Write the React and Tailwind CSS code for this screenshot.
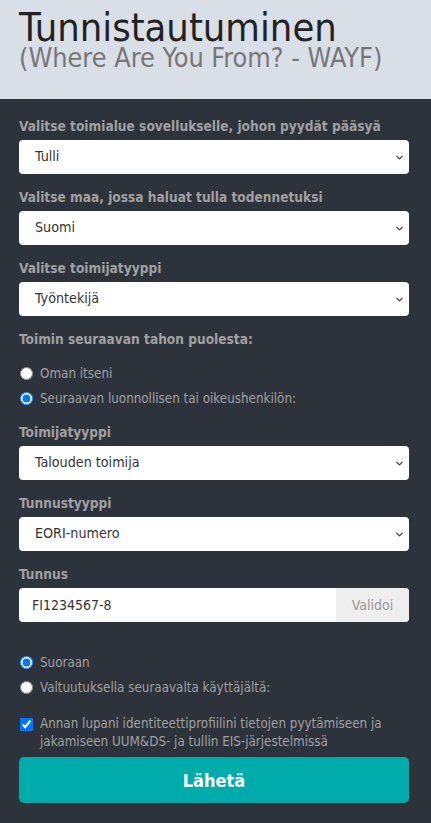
import { ChevronDown } from 'lucide-react'

const font = { fontFamily: '"DejaVu Sans Condensed", "DejaVu Sans", Verdana, sans-serif' }

const Label = ({ children }) => (
  <div className="text-[13.6px] font-bold text-[#a0a0a0] leading-[16px] mb-[6px]">{children}</div>
)

const Select = ({ value }) => (
  <div className="relative">
    <select
      defaultValue={value}
      className="appearance-none w-full h-[34px] bg-white rounded-[4px] pl-[16px] pr-8 text-[14.2px] text-[#333] outline-none"
      style={font}
    >
      <option>{value}</option>
    </select>
    <ChevronDown className="absolute right-[4px] top-[12px] w-[11px] h-[11px] text-[#444] pointer-events-none" strokeWidth={3} />
  </div>
)

const Radio = ({ label, checked, name }) => (
  <label className="flex items-center gap-[7px] h-[25px] text-[13.3px] text-[#a0a0a0]">
    <input type="radio" name={name} defaultChecked={checked} className="w-[13px] h-[13px] m-0 ml-[1px] accent-[#0075ff]" />
    <span>{label}</span>
  </label>
)

export default function App() {
  return (
    <div className="min-h-[823px] bg-[#2d333b]" style={font}>
      <div className="bg-[#d9dfe7] h-[99px] px-[19px] pt-[9px]">
        <h1 className="text-[39.5px] leading-[36px] text-[#222]">Tunnistautuminen</h1>
        <div className="text-[26.8px] leading-[26px] text-[#777]">(Where Are You From? - WAYF)</div>
      </div>
      <div className="pl-[19px] pr-[22px] pt-[19px]">
        <Label>Valitse toimialue sovellukselle, johon pyydät pääsyä</Label>
        <Select value="Tulli" />
        <div className="h-[15px]" />
        <Label>Valitse maa, jossa haluat tulla todennetuksi</Label>
        <Select value="Suomi" />
        <div className="h-[15px]" />
        <Label>Valitse toimijatyyppi</Label>
        <Select value="Työntekijä" />
        <div className="h-[15px]" />
        <Label>Toimin seuraavan tahon puolesta:</Label>
        <div className="h-[8px]" />
        <Radio name="puolesta" label="Oman itseni" />
        <Radio name="puolesta" label="Seuraavan luonnollisen tai oikeushenkilön:" checked />
        <div className="h-[13px]" />
        <Label>Toimijatyyppi</Label>
        <Select value="Talouden toimija" />
        <div className="h-[15px]" />
        <Label>Tunnustyyppi</Label>
        <Select value="EORI-numero" />
        <div className="h-[15px]" />
        <Label>Tunnus</Label>
        <div className="flex h-[34px] rounded-[4px] overflow-hidden bg-white">
          <input
            defaultValue="FI1234567-8"
            className="flex-1 min-w-0 pl-[13px] text-[14px] text-[#333] outline-none"
            style={font}
          />
          <button className="w-[73px] bg-[#eeeeee] text-[14px] text-[#999]" style={font}>Validoi</button>
        </div>
        <div className="h-[28px]" />
        <Radio name="tapa" label="Suoraan" checked />
        <Radio name="tapa" label="Valtuutuksella seuraavalta käyttäjältä:" />
        <label className="flex items-start gap-[7px] mt-[15px] text-[13.3px] leading-[18px] text-[#a0a0a0]">
          <input type="checkbox" defaultChecked className="w-[13px] h-[13px] mt-[3px] ml-[1px] shrink-0 accent-[#0075ff]" />
          <span>Annan lupani identiteettiprofiilini tietojen pyytämiseen ja jakamiseen UUM&amp;DS- ja tullin EIS-järjestelmissä</span>
        </label>
        <button className="mt-[6px] w-full h-[46px] rounded-[5px] bg-[#00abab] text-white text-[18px] font-bold">
          Lähetä
        </button>
      </div>
    </div>
  )
}
